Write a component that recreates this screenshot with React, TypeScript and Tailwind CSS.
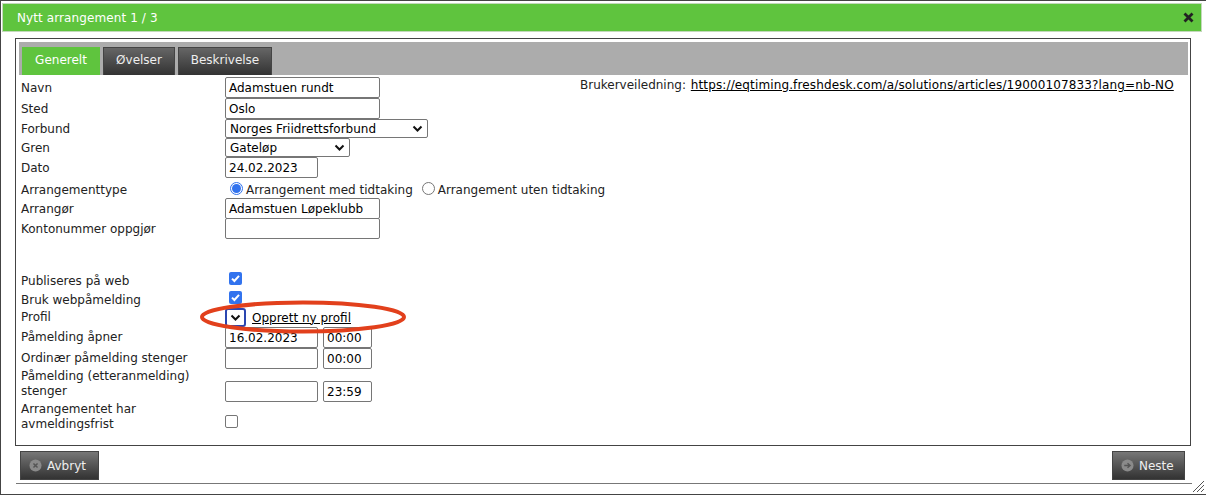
const font = { fontFamily: '"DejaVu Sans", Verdana, sans-serif' };

function Row({ label, h, labelClass = "", children }: { label: React.ReactNode; h: string; labelClass?: string; children?: React.ReactNode }) {
    return (
        <div className={`flex items-center ${h}`}>
            <div className={`w-[204px] shrink-0 text-[12px] leading-[15px] text-[#222] ${labelClass}`}>{label}</div>
            <div className="flex items-center flex-1">{children}</div>
        </div>
    );
}

function TextBox({ value, w }: { value?: string; w: string }) {
    return (
        <div className={`${w} h-[21px] shrink-0 border border-[#767676] rounded-[2px] bg-white px-[3px] text-[12px] leading-[21px] text-black overflow-hidden`}>
            {value}
        </div>
    );
}

function Chevron() {
    return (
        <svg width="11" height="8" viewBox="0 0 11 8" fill="none">
            <path d="M1.5 1.5 L5.5 5.5 L9.5 1.5" stroke="#111" strokeWidth="2" />
        </svg>
    );
}

function SelectBox({ value, w }: { value: string; w: string }) {
    return (
        <div className={`${w} h-[19px] flex items-center justify-between border border-[#767676] rounded-[2px] bg-white pl-[4px] pr-[4px] text-[12px] text-black`}>
            <span>{value}</span>
            <Chevron />
        </div>
    );
}

function Check({ on }: { on?: boolean }) {
    if (!on) return <div className="w-[13px] h-[13px] border border-[#767676] rounded-[2px] bg-white" />;
    return (
        <div className="ml-[4px] -mt-[2px] w-[13px] h-[13px] rounded-[2px] bg-[#3273ee] flex items-center justify-center">
            <svg width="11" height="11" viewBox="0 0 11 11" fill="none">
                <path d="M2 5.6 L4.4 8 L9 2.8" stroke="#fff" strokeWidth="2" />
            </svg>
        </div>
    );
}

function Radio({ on }: { on?: boolean }) {
    return (
        <div className={`w-[13px] h-[13px] rounded-full bg-white border flex items-center justify-center ${on ? "border-[#3273ee]" : "border-[#767676]"}`}>
            {on && <div className="w-[9px] h-[9px] rounded-full bg-[#3273ee]" />}
        </div>
    );
}

function DarkButton({ label, icon, w }: { label: string; icon: "x" | "arrow"; w: string }) {
    return (
        <div className={`${w} h-[29px] flex items-center pl-[8px] gap-[5px] border border-[#444] bg-gradient-to-b from-[#777] to-[#333] text-[12px] text-[#eee]`}>
            <svg width="13" height="13" viewBox="0 0 14 14">
                <circle cx="7" cy="7" r="6.5" fill="#8a8a8a" />
                {icon === "x" ? (
                    <path d="M4.8 4.8 L9.2 9.2 M9.2 4.8 L4.8 9.2" stroke="#555" strokeWidth="1.6" />
                ) : (
                    <path d="M3.5 7 H9.5 M7 4.5 L9.8 7 L7 9.5" stroke="#555" strokeWidth="1.5" fill="none" />
                )}
            </svg>
            <span>{label}</span>
        </div>
    );
}

export default function App() {
    return (
        <div className="relative w-[1206px] h-[495px] bg-white overflow-hidden border border-[#444] border-r-0 pt-[2px] pl-[1px]" style={font}>
            {/* Title bar */}
            <div className="w-[1200px] h-[29px] flex items-center justify-between bg-[#5fc43e] border border-[#c4d8bc] pl-[14px] pr-[7px]">
                <span className="text-[12px] tracking-[0.1px] text-white">Nytt arrangement 1 / 3</span>
                <svg width="11" height="11" viewBox="0 0 11 11">
                    <path d="M1.5 1.5 L9.5 9.5 M9.5 1.5 L1.5 9.5" stroke="#222" strokeWidth="2.8" />
                </svg>
            </div>

            {/* Panel */}
            <div className="ml-[13px] mt-[6px] w-[1176px] h-[408px] border border-[#444] p-[3px]">
                <div className="h-[33px] w-[1169px] flex items-end gap-[3px] bg-[#acacac] pl-[3px]">
                    <div className="w-[78px] h-[28px] flex items-center justify-center pb-[2px] bg-[#5fc43e] text-[12px] text-white">Generelt</div>
                    <div className="w-[72px] h-[28px] flex items-center justify-center pb-[3px] border border-[#444] border-b-0 bg-gradient-to-b from-[#666] to-[#333] text-[12px] text-[#eee]">Øvelser</div>
                    <div className="w-[94px] h-[28px] flex items-center justify-center pb-[3px] border border-[#444] border-b-0 bg-gradient-to-b from-[#666] to-[#333] text-[12px] text-[#eee]">Beskrivelse</div>
                </div>

                <div className="relative pl-[2px] pt-[2px]">
                    <div className="absolute left-[561px] top-[2px] text-[12px] leading-[16px] text-[#222] whitespace-nowrap">
                        Brukerveiledning: <span className="ml-[1px] tracking-[0.13px] underline text-black">https://eqtiming.freshdesk.com/a/solutions/articles/19000107833?lang=nb-NO</span>
                    </div>

                    <Row label="Navn" h="h-[21px]" labelClass="pt-[2px]"><TextBox value="Adamstuen rundt" w="w-[155px]" /></Row>
                    <Row label="Sted" h="h-[21px]" labelClass="pt-[2px]"><TextBox value="Oslo" w="w-[155px]" /></Row>
                    <Row label="Forbund" h="h-[19px]" labelClass="pt-[2px]"><SelectBox value="Norges Friidrettsforbund" w="w-[203px]" /></Row>
                    <Row label="Gren" h="h-[19px]" labelClass="pt-[2px]"><SelectBox value="Gateløp" w="w-[125px]" /></Row>
                    <Row label="Dato" h="h-[21px]" labelClass="pt-[2px]"><TextBox value="24.02.2023" w="w-[93px]" /></Row>
                    <Row label="Arrangementtype" h="h-[20px]" labelClass="pt-[4px]">
                        <div className="flex items-center text-[12px] text-[#222] pl-[5px]">
                            <Radio on />
                            <span className="ml-[3px] pt-[4px]">Arrangement med tidtaking</span>
                            <div className="ml-[9px]"><Radio /></div>
                            <span className="ml-[3px] pt-[4px]">Arrangement uten tidtaking</span>
                        </div>
                    </Row>
                    <Row label="Arrangør" h="h-[20px]" labelClass="pt-[2px]"><TextBox value="Adamstuen Løpeklubb" w="w-[155px]" /></Row>
                    <Row label="Kontonummer oppgjør" h="h-[21px]" labelClass="pt-[2px]"><TextBox w="w-[155px]" /></Row>
                    <div className="h-[31px]" />
                    <Row label="Publiseres på web" h="h-[19px]" labelClass="pt-[4px]"><Check on /></Row>
                    <Row label="Bruk webpåmelding" h="h-[19px]" labelClass="pt-[4px]"><Check on /></Row>
                    <Row label="Profil" h="h-[19px]">
                        <div className="w-[21px] h-[19px] flex items-center justify-center border-2 border-[#2b46b0] rounded-[3px] bg-white"><Chevron /></div>
                        <span className="ml-[6px] text-[12px] underline text-black">Opprett ny profil</span>
                    </Row>
                    <Row label="Påmelding åpner" h="h-[21px]">
                        <TextBox value="16.02.2023" w="w-[93px]" />
                        <div className="ml-[5px]"><TextBox value="00:00" w="w-[49px]" /></div>
                    </Row>
                    <Row label="Ordinær påmelding stenger" h="h-[21px]">
                        <TextBox w="w-[93px]" />
                        <div className="ml-[5px]"><TextBox value="00:00" w="w-[49px]" /></div>
                    </Row>
                    <Row label={<>Påmelding (etteranmelding)<br />stenger</>} h="h-[33px]" labelClass="-mt-[4px]">
                        <div className="pt-[11px] flex">
                            <TextBox w="w-[93px]" />
                            <div className="ml-[5px]"><TextBox value="23:59" w="w-[49px]" /></div>
                        </div>
                    </Row>
                    <Row label={<>Arrangementet har<br />avmeldingsfrist</>} h="h-[33px]" labelClass="-mt-[4px]">
                        <div className="pt-[6px]"><Check /></div>
                    </Row>
                </div>
            </div>

            {/* Footer */}
            <div className="ml-[18px] mt-[5px] w-[1165px] flex justify-between">
                <DarkButton label="Avbryt" icon="x" w="w-[79px]" />
                <DarkButton label="Neste" icon="arrow" w="w-[73px]" />
            </div>
            <div className="ml-[14px] mt-[3px] w-[1176px] h-px bg-[#777]" />

            {/* Resize grip */}
            <svg className="absolute right-[1px] bottom-[1px]" width="13" height="13" viewBox="0 0 13 13">
                <path d="M1 12 L12 1 M5 12 L12 5 M9 12 L12 9" stroke="#555" strokeWidth="1" />
            </svg>

            {/* Red marker drawn over the page */}
            <svg className="absolute left-[198px] top-[298px] pointer-events-none" width="210" height="36" viewBox="0 0 210 36" fill="none">
                <ellipse cx="104" cy="18" rx="101" ry="14.5" stroke="#e2401c" strokeWidth="4" />
            </svg>
        </div>
    );
}
